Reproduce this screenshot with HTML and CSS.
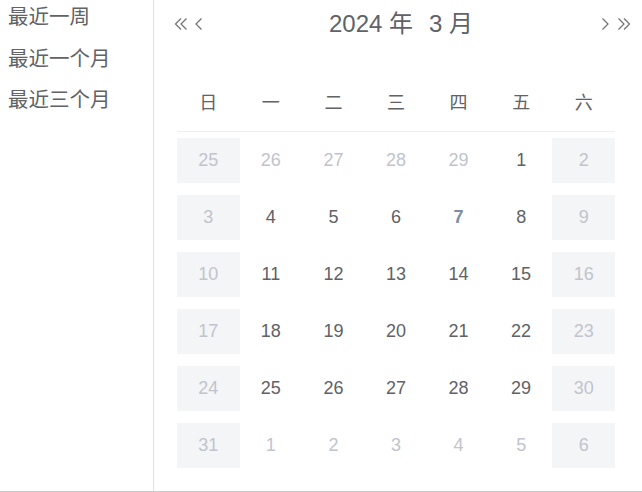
FILE: index.html
```html
<!DOCTYPE html>
<html lang="zh">
<head>
<meta charset="utf-8">
<title>日期选择</title>
<link rel="stylesheet" href="styles.css">
</head>
<body>
<div class="picker">
  <aside class="sidebar">
    <div class="shortcut">最近一周</div>
    <div class="shortcut">最近一个月</div>
    <div class="shortcut">最近三个月</div>
  </aside>
  <section class="panel">
    <header class="head">
      <div class="nav nav-left">
        <svg class="ico ico-d" width="14" height="12" viewBox="0 0 14 12"><path d="M7 .5 L1.5 6 L7 11.5 M12.5 .5 L7 6 L12.5 11.5"/></svg>
        <svg class="ico ico-s" width="8" height="12" viewBox="0 0 8 12"><path d="M6.5 .5 L1 6 L6.5 11.5"/></svg>
      </div>
      <div class="title"><span class="year">2024 年</span><span class="month">3 月</span></div>
      <div class="nav nav-right">
        <svg class="ico ico-s" width="8" height="12" viewBox="0 0 8 12"><path d="M1.5 .5 L7 6 L1.5 11.5"/></svg>
        <svg class="ico ico-d" width="14" height="12" viewBox="0 0 14 12"><path d="M1.5 .5 L7 6 L1.5 11.5 M7 .5 L12.5 6 L7 11.5"/></svg>
      </div>
    </header>
    <div class="weekdays">
      <span>日</span><span>一</span><span>二</span><span>三</span><span>四</span><span>五</span><span>六</span>
    </div>
    <div class="days">
      <span class="d wk">25</span><span class="d other">26</span><span class="d other">27</span><span class="d other">28</span><span class="d other">29</span><span class="d">1</span><span class="d wk">2</span>
      <span class="d wk">3</span><span class="d">4</span><span class="d">5</span><span class="d">6</span><span class="d today">7</span><span class="d">8</span><span class="d wk">9</span>
      <span class="d wk">10</span><span class="d">11</span><span class="d">12</span><span class="d">13</span><span class="d">14</span><span class="d">15</span><span class="d wk">16</span>
      <span class="d wk">17</span><span class="d">18</span><span class="d">19</span><span class="d">20</span><span class="d">21</span><span class="d">22</span><span class="d wk">23</span>
      <span class="d wk">24</span><span class="d">25</span><span class="d">26</span><span class="d">27</span><span class="d">28</span><span class="d">29</span><span class="d wk">30</span>
      <span class="d wk">31</span><span class="d other">1</span><span class="d other">2</span><span class="d other">3</span><span class="d other">4</span><span class="d other">5</span><span class="d wk">6</span>
    </div>
  </section>
</div>
</body>
</html>
```
FILE: styles.css
```css
html, body {
  margin: 0;
  padding: 0;
  background: #ffffff;
}
body {
  font-family: "Liberation Sans", "Noto Sans CJK SC", sans-serif;
  color: #606266;
}
.picker {
  display: flex;
  height: 491px;
  border-bottom: 1px solid #c8c8c8;
}
.sidebar {
  flex: none;
  width: 154px;
  box-sizing: border-box;
  border-right: 1px solid #e2e2e2;
  padding: 1px 0 0 8px;
  display: flex;
  flex-direction: column;
  gap: 13.5px;
}
.shortcut {
  font-family: "Noto Sans CJK SC", sans-serif;
  font-size: 20.5px;
  line-height: 28px;
  height: 28px;
  color: #606266;
}
.panel {
  flex: 1;
  padding: 0 27px 0 23px;
}
.head {
  margin: 0 -17px 0 -4px;
  height: 48px;
  display: grid;
  grid-template-columns: 1fr auto 1fr;
  align-items: center;
}
.nav {
  display: flex;
  align-items: center;
}
.nav-left {
  justify-content: flex-start;
  padding-left: 1px;
  gap: 7px;
}
.nav-right {
  justify-content: flex-end;
  padding-right: 1px;
  gap: 8px;
}
.ico {
  display: block;
}
.ico path {
  fill: none;
  stroke: #6e7075;
  stroke-width: 1.2;
}
.title {
  font-size: 24px;
  line-height: 48px;
  color: #606266;
  margin-right: 3px;
  white-space: pre;
}
.title .year {
  margin-right: 16px;
}
.weekdays {
  margin-top: 29px;
  display: grid;
  grid-template-columns: repeat(7, 1fr);
  height: 48px;
  line-height: 48px;
  padding-bottom: 6px;
  border-bottom: 1px solid #ebeef5;
  font-family: "Noto Sans CJK SC", sans-serif;
  font-size: 18px;
  text-align: center;
  color: #606266;
}
.days {
  margin-top: 6px;
  display: grid;
  grid-template-columns: repeat(7, 1fr);
  row-gap: 12px;
}
.d {
  height: 45px;
  line-height: 45px;
  text-align: center;
  font-size: 18px;
  color: #606266;
}
.d.other {
  color: #c0c4cc;
}
.d.wk {
  background: #f4f5f7;
  color: #c0c4cc;
}
.d.today {
  color: #7b8ea4;
  font-weight: bold;
}
```
